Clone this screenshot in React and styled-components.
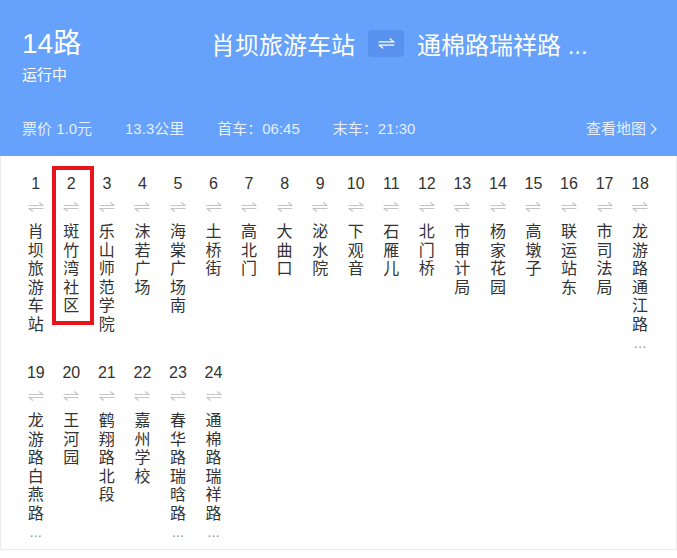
import React from "react";
import styled, { createGlobalStyle } from "styled-components";

const GlobalStyle = createGlobalStyle`
  body {
    margin: 0;
    background: #fff;
    font-family: "Liberation Sans", "Noto Sans CJK SC", sans-serif;
  }
`;

const stations = [
  "肖坝旅游车站",
  "斑竹湾社区",
  "乐山师范学院",
  "沫若广场",
  "海棠广场南",
  "土桥街",
  "高北门",
  "大曲口",
  "泌水院",
  "下观音",
  "石雁儿",
  "北门桥",
  "市审计局",
  "杨家花园",
  "高墩子",
  "联运站东",
  "市司法局",
  "龙游路通江路口",
  "龙游路白燕路口",
  "王河园",
  "鹤翔路北段",
  "嘉州学校",
  "春华路瑞晗路口",
  "通棉路瑞祥路口",
];

const Card = styled.div`
  width: 677px;
  height: 550px;
  box-sizing: border-box;
  border: 1px solid #ececec;
  border-top: none;
  background: #fff;
`;

const Header = styled.div`
  height: 156px;
  margin: 0 -1px;
  box-sizing: border-box;
  background: #66a1fb;
  color: #fff;
  padding: 28px 20px 0 22px;
  display: flex;
  flex-direction: column;
`;

const TopRow = styled.div`
  display: flex;
  align-items: flex-start;
`;

const LineBlock = styled.div`
  width: 189px;
  flex-shrink: 0;
`;

const LineName = styled.div`
  font-size: 28px;
  line-height: 32px;
`;

const LineState = styled.div`
  margin-top: 5px;
  font-size: 15px;
  line-height: 20px;
`;

const Route = styled.div`
  display: flex;
  align-items: center;
  gap: 13px;
  height: 30px;
  font-size: 24px;
  white-space: nowrap;
`;

const SwapButton = styled.div`
  width: 36px;
  height: 27px;
  border-radius: 4px;
  background: #5891ee;
  display: flex;
  align-items: center;
  justify-content: center;
`;

const InfoRow = styled.div`
  margin-top: 34px;
  display: flex;
  align-items: center;
  font-size: 15px;
  line-height: 20px;
  color: rgba(255, 255, 255, 0.85);
`;

const Info = styled.span`
  margin-right: 33px;
`;

const MapLink = styled.span`
  margin-left: auto;
  display: flex;
  align-items: center;
  gap: 4px;
`;

const StationGrid = styled.div`
  display: grid;
  grid-template-columns: repeat(18, 35.56px);
  row-gap: 13px;
  padding: 18px 0 0 17px;
  align-items: start;
`;

const Station = styled.div`
  position: relative;
  display: flex;
  flex-direction: column;
  align-items: center;
  color: #333;
`;

const Num = styled.div`
  font-size: 16px;
  line-height: 20px;
`;

const Arrows = styled.div`
  margin-top: 8px;
  height: 10px;
  display: flex;
`;

const Name = styled.div`
  margin-top: 9px;
  width: 16px;
  font-size: 16px;
  line-height: 18.5px;
  text-align: center;
  word-break: break-all;
  font-family: "Noto Sans CJK SC", sans-serif;
`;

const More = styled.div`
  margin-top: 4px;
  font-size: 15px;
  line-height: 14px;
  height: 14px;
  color: #999;
`;

const Highlight = styled.div`
  position: absolute;
  top: -8px;
  left: -2px;
  width: 42px;
  height: 159px;
  box-sizing: border-box;
  border: 4px solid #e8141c;
`;

const SwapIcon = ({ color, width = 16, height = 10 }) => (
  <svg width={width} height={height} viewBox="0 0 16 10" fill="none">
    <path
      d="M1 3.5H15M15 3.5L11.5 0.8M15 6.5H1M1 6.5L4.5 9.2"
      stroke={color}
      strokeWidth="1.2"
      strokeLinecap="round"
    />
  </svg>
);

const Chevron = () => (
  <svg width="7" height="12" viewBox="0 0 7 12" fill="none">
    <path d="M1 1L6 6L1 11" stroke="rgba(255,255,255,0.85)" strokeWidth="1.3" />
  </svg>
);

const StationItem = ({ index, name, active }) => {
  const cut = name.length > 6;
  return (
    <Station>
      {active && <Highlight />}
      <Num>{index}</Num>
      <Arrows>
        <SwapIcon color="#c4c4c4" />
      </Arrows>
      <Name>{cut ? name.slice(0, 6) : name}</Name>
      {cut && <More>...</More>}
    </Station>
  );
};

export default function App() {
  return (
    <>
      <GlobalStyle />
      <Card>
        <Header>
          <TopRow>
            <LineBlock>
              <LineName>14路</LineName>
              <LineState>运行中</LineState>
            </LineBlock>
            <Route>
              <span>肖坝旅游车站</span>
              <SwapButton>
                <SwapIcon color="#fff" width={17} height={11} />
              </SwapButton>
              <span>通棉路瑞祥路 ...</span>
            </Route>
          </TopRow>
          <InfoRow>
            <Info>票价 1.0元</Info>
            <Info>13.3公里</Info>
            <Info>首车：06:45</Info>
            <Info>末车：21:30</Info>
            <MapLink>
              查看地图 <Chevron />
            </MapLink>
          </InfoRow>
        </Header>
        <StationGrid>
          {stations.map((s, i) => (
            <StationItem key={s} index={i + 1} name={s} active={i === 1} />
          ))}
        </StationGrid>
      </Card>
    </>
  );
}
